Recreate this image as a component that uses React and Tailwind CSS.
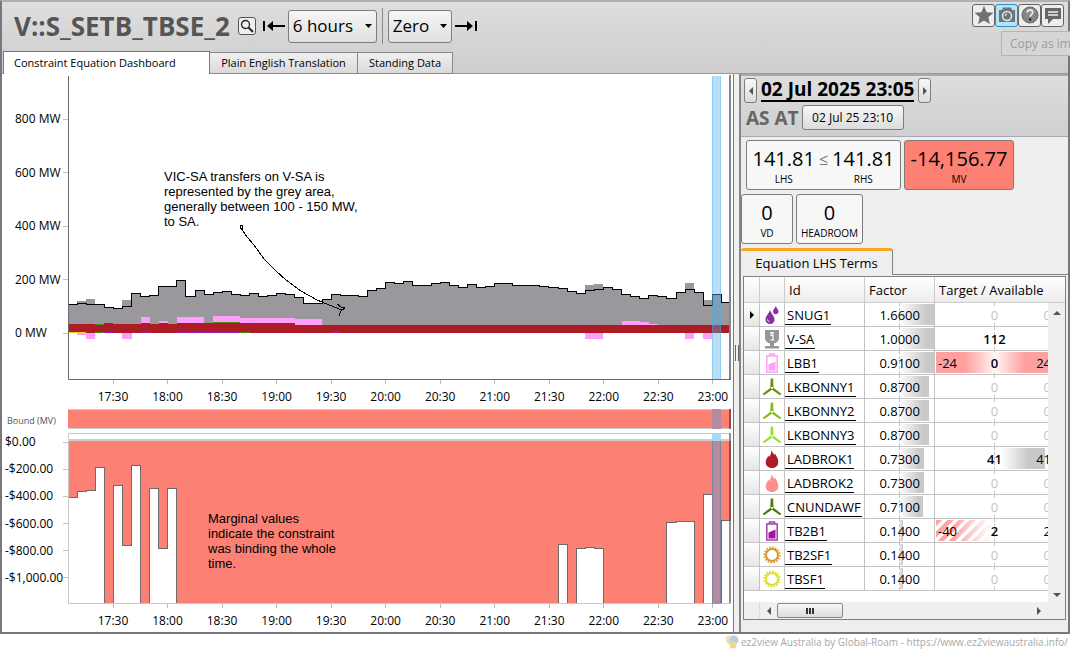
import React from "react";

const SLOT = 9.075;
const LEFT = 68;
const slotX = (i) => LEFT + i * SLOT;
const SLOTS = 73;

const times = ["17:30", "18:00", "18:30", "19:00", "19:30", "20:00", "20:30", "21:00", "21:30", "22:00", "22:30", "23:00"];

/* Top of the flow line for each five-minute interval */
const flow = [
  304.5, 303.5, 304.5, 304.5, 307.5, 308.5, 306.5, 293.5, 296, 295.5, 286.5, 286.5, 280.5, 296.5, 290.5, 294.5, 292.5, 291.5,
  294.5, 295.5, 293.5, 296.5, 295.5, 293.5, 294.5, 297.5, 303.5, 303.5, 299.5, 294.5, 295.5, 295.5, 296.5, 290.5, 288.5,
  282.5, 283.5, 281.5, 285.5, 285.5, 283.5, 282.5, 285.5, 287.5, 284.5, 287.5, 286.5, 283.5, 283.5, 285.5, 285.5, 285.5,
  286.5, 287.5, 288.5, 291.5, 293.5, 290.5, 289.5, 287.5, 289.5, 294.5, 296.5, 298.5, 295.5, 296.5, 298.5, 292.5, 289.5,
  292.5, 305.5, 294.5, 302.5,
];
const greyExtra = { 1: 301, 2: 299, 6: 300, 57: 285, 58: 284, 68: 283, 70: 300 };

/* [first slot, slot count, top, bottom] */
const pink = [
  [8, 1, 317, 325], [10, 1, 321, 325], [12, 3, 317, 325], [16, 3, 316, 325], [19, 5, 318, 325], [24, 1, 318, 325],
  [25, 3, 319, 325], [61, 2, 321, 325], [63, 1, 322, 325], [64, 1, 324, 325],
  [1, 1, 332, 335], [2, 1, 332, 339], [6, 1, 332, 339], [57, 2, 332, 339], [68, 1, 332, 339], [70, 1, 332, 339],
];
const red = [[0, 4, 324, 333], [4, 1, 323, 333], [5, 3, 324, 333], [8, 1, 323, 333], [9, 1, 324, 333], [10, 1, 323, 333],
  [11, 1, 324, 333], [12, 13, 323, 333], [25, 48, 325, 333]];

/* Lower edge of the marginal value area; 603 is the floor of the plot */
const marginal = Array(SLOTS).fill(603);
Object.assign(marginal, {
  0: 497.5, 1: 491.5, 2: 490.5, 3: 467.5, 5: 485.5, 6: 545.5, 7: 465.5, 9: 488.5, 10: 548.5, 11: 488.5,
  54: 544.5, 56: 548, 57: 547, 58: 548, 66: 522, 67: 521.5, 68: 521, 70: 494, 72: 520.5,
});

const steps = (ys) =>
  ys.map((y, i) => `${i ? "V" : "M" + slotX(0) + " "}${y}H${slotX(i + 1)}`).join("");

function Blocks({ items, fill }) {
  return items.map(([s, n, t, b]) => (
    <rect key={s + "-" + t} x={slotX(s)} y={t} width={n * SLOT} height={b - t} fill={fill} shapeRendering="crispEdges" />
  ));
}

function FlowChart() {
  return (
    <svg viewBox="68 75 663 305" preserveAspectRatio="none" className="block h-full w-full" role="img" aria-label="Flow in MW">
      <path d={steps(flow) + "V333H68Z"} fill="#9a989d" />
      {Object.entries(greyExtra).map(([i, y]) => (
        <rect key={i} x={slotX(+i)} y={y} width={SLOT} height={flow[i] - y} fill="#9a989d" shapeRendering="crispEdges" />
      ))}
      <Blocks items={pink} fill="#ff9ffc" />
      <Blocks items={red} fill="#ad1c24" />
      <Blocks items={[[3, 1, 324, 325], [16, 3, 322, 323], [3, 1, 332, 333], [19, 1, 332, 333]]} fill="#4f8a10" />
      <Blocks items={[[4, 1, 332, 333], [8, 1, 332, 333], [12, 7, 332, 333], [29, 1, 332, 333]]} fill="#9b1fb0" />
      <Blocks items={[[0, 2, 332, 333]]} fill="#f0d020" />
      <path d={steps(flow)} fill="none" stroke="#000" strokeWidth="1" shapeRendering="crispEdges" />
      <rect x="712" y="76" width="9" height="303" fill="#4aaee8" fillOpacity=".4" />
      <path d="M712.5 76V379M720.5 76V379" stroke="#4aaee8" strokeOpacity=".35" />
      <rect x="729" y="75" width="2" height="304" fill="#87878a" />
      <path d="M68.500 76V379.500H731" fill="none" stroke="#6a6a6a" />
      <path d="M240 225h2.500v3h-2.500zM241 228l6 9 7 8 10 14 12 12 10 9 15 11 16 9 12 5 13 5M337 304l4 3 4 1-4 3-1 2-1 3" fill="none" stroke="#000" shapeRendering="crispEdges" />
    </svg>
  );
}

function MarginalChart() {
  return (
    <svg viewBox="68 409 663 195" preserveAspectRatio="none" className="block h-full w-full" role="img" aria-label="Marginal value in dollars">
      <rect x="68" y="409" width="663" height="20" fill="#fc8073" />
      <path d="M68 409.500H731M68 428.500H731" stroke="#c9cfca" />
      <path d={"M68 441" + steps(marginal).replace("M68 ", "V") + "V441Z"} fill="#fc8073" />
      <path d={steps(marginal)} fill="none" stroke="#6c6a6a" shapeRendering="crispEdges" />
      <path d="M68.500 603.500V433.500H731M68 603.500H731" fill="none" stroke="#c8c8c8" />
      <rect x="68" y="439" width="663" height="2" fill="#ccd0c8" />
      <rect x="712" y="409" width="9" height="20" fill="#b48aa0" />
      <rect x="712" y="433" width="9" height="8" fill="#a9d6f2" />
      <rect x="712" y="441" width="9" height="163" fill="#b48aa0" />
      <path d="M712.500 441V603M720.500 441V603" stroke="#7a86a0" />
      <path d="M730 409V429M730 441V521" stroke="#8f4a4c" strokeWidth="2" />
      <path d="M730 433V441M730 521V603" stroke="#8f8f92" strokeWidth="2" />
    </svg>
  );
}

function TimeAxis() {
  return (
    <div className="flex justify-between pl-[27px]">
      {times.map((t) => (
        <div key={t} className="flex w-9 flex-col items-center">
          <span className="h-1 w-px bg-[#bbb]" />
          <span className="mt-1 leading-[18px]">{t}</span>
        </div>
      ))}
    </div>
  );
}

function ValueAxis({ labels, className }) {
  return (
    <div className={"flex shrink-0 flex-col justify-between " + className}>
      {labels.map((l) => (
        <div key={l} className="flex h-5 items-center justify-between whitespace-nowrap">
          <span>{l}</span>
          <span className="h-px w-[5px] bg-[#c4c4c4]" />
        </div>
      ))}
    </div>
  );
}

const Turbine = ({ c }) => (
  <svg viewBox="0 0 20 20" className="h-5 w-5">
    <path d="M8.700 1.500h2.400l.4 8.700h-3.200zM8.800 10.400l1.500 2L2 18.200l-1.300-1.400zM11.200 10.400l-1.500 2L18 18.200l1.300-1.400z" fill={c} />
    <circle cx="10" cy="11" r=".8" fill="#fff" />
  </svg>
);
const Flame = ({ c }) => (
  <svg viewBox="0 0 20 20" className="h-5 w-5">
    <path d="M9.500 1c.5 2 1.800 3.200 2.800 5 .4-.4.600-1 .7-1.500 1.500 2.500 3.300 5.500 3.300 8.500 0 3.500-2.300 6-6.300 6s-6.300-2.500-6.300-5.800c0-3 1.800-4.700 2.800-6.700.2.700.5 1.200.9 1.500C8.300 6 9.500 4 9.500 1z" fill={c} />
  </svg>
);
const Battery = ({ c, o }) => (
  <svg viewBox="0 0 20 20" className="h-5 w-5">
    <path d="M7.500 3V1h5v2M4.800 3h10.400v16H4.800z" fill="#fff" stroke={o} strokeWidth="1.500" />
    <path d="M6.500 11.500l7-3v9h-7z" fill={c} />
  </svg>
);
const Sun = ({ c }) => (
  <svg viewBox="0 0 20 20" className="h-5 w-5">
    <circle cx="10" cy="10" r="6" fill="#fff" stroke={c} strokeWidth="2" />
    <circle cx="10" cy="10" r="7.600" fill="none" stroke={c} strokeWidth="2" strokeDasharray="1.500 1.484" />
  </svg>
);
const Drops = () => (
  <svg viewBox="0 0 20 20" className="h-5 w-5">
    <path d="M8 5c1 3.500 4.500 6 4.500 9.500A4.300 4.300 0 0 1 8 19a4.300 4.300 0 0 1-4.500-4.500C3.500 11 7 8.500 8 5z" fill="#8a2fa0" />
    <path d="M13.800 1c.6 2 2.700 3.500 2.700 5.500a2.700 2.700 0 0 1-5.400 0c0-2 2.100-3.500 2.700-5.500z" fill="#8a2fa0" />
    <path d="M5.500 14.500c.2 1.300 1 2 2 2.200" stroke="#fff" fill="none" />
  </svg>
);
const Link = () => (
  <svg viewBox="0 0 20 20" className="h-5 w-5">
    <path d="M3 1h14v8c0 3-2 4.500-5 5.500V17h5v2.500H3V17h5v-2.500C5 13.500 3 12 3 9z" fill="#97959a" />
    <path d="M8.300 6.500H11V11m-2.700 0h4M9 3.500h2v1.500H9z" fill="none" stroke="#fff" strokeWidth="1.200" />
  </svg>
);

const rows = [
  { id: "SNUG1", icon: <Drops />, factor: "1.6600", bar: 35, t: "0", r: "0", dim: true },
  { id: "V-SA", icon: <Link />, factor: "1.0000", bar: 35, t: "112" },
  { id: "LBB1", icon: <Battery c="#ff9ffc" o="#f9a3f7" />, factor: "0.9100", bar: 35, l: "-24", t: "0", r: "24", fill: "bg-linear-to-r from-[#ffa0a0] from-25% via-[#fff5f5] via-50% to-[#ffa0a0] to-75%" },
  { id: "LKBONNY1", icon: <Turbine c="#6b8e12" />, factor: "0.8700", bar: 30, t: "0", r: "0", dim: true },
  { id: "LKBONNY2", icon: <Turbine c="#86b81f" />, factor: "0.8700", bar: 30, t: "0", r: "0", dim: true },
  { id: "LKBONNY3", icon: <Turbine c="#9adf2e" />, factor: "0.8700", bar: 30, t: "0", r: "0", dim: true },
  { id: "LADBROK1", icon: <Flame c="#b01c26" />, factor: "0.7300", bar: 25, t: "41", r: "41", fill: "mr-[9px] bg-linear-to-r from-transparent from-60% to-[#c8c8c8] to-85%" },
  { id: "LADBROK2", icon: <Flame c="#ff8f8f" />, factor: "0.7300", bar: 25, t: "0", r: "0", dim: true },
  { id: "CNUNDAWF", icon: <Turbine c="#4f7a0c" />, factor: "0.7100", bar: 24, t: "0", r: "0", dim: true },
  { id: "TB2B1", icon: <Battery c="#a80fa8" o="#a040a8" />, factor: "0.1400", bar: 4, l: "-40", t: "2", r: "2", fill: "mr-[62px] bg-[repeating-linear-gradient(135deg,#ffa3a3_0px,#ffa3a3_4px,#ffffff_5px,#ffffff_8px)] mask-r-from-30%" },
  { id: "TB2SF1", icon: <Sun c="#d99a2b" />, factor: "0.1400", bar: 4, t: "0", r: "0", dim: true },
  { id: "TBSF1", icon: <Sun c="#dede2c" />, factor: "0.1400", bar: 4, t: "0", r: "0", dim: true },
];

const box = "rounded-[3px] border border-[#7d7d7d]";
const tool = "flex h-[23px] w-[23px] items-center justify-center rounded-[3px] border";
const btnFill = "bg-linear-to-b from-[#f8f8f8] to-[#dcdcdc]";

function Picker({ label, value, className }) {
  return (
    <label className={"relative flex h-[33px] items-center " + box + " bg-linear-to-b from-[#f6f6f6] to-[#dfdfdf] " + className}>
      <select aria-label={label} className="h-full w-full appearance-none pl-1 text-[17px] leading-7 outline-none">
        <option>{value}</option>
      </select>
      <svg viewBox="0 0 7 4" className="pointer-events-none absolute right-1 h-1 w-[7px]"><path d="M0 0h7L3.500 4z" /></svg>
    </label>
  );
}

function Arrow({ d }) {
  return <svg viewBox="0 0 8 8" className="h-2 w-2"><path d={d} fill="#555" /></svg>;
}

function TermsTable() {
  return (
    <div className="mx-[2px] mt-px border border-[#808080] bg-white">
      <div className="flex">
        <div className="min-w-0 flex-1 overflow-hidden">
          <table className="w-full table-fixed border-separate border-spacing-0 text-[13px] leading-5">
            <colgroup>
              <col className="w-4" /><col className="w-[25px]" /><col className="w-20" /><col className="w-[70px]" /><col />
            </colgroup>
            <thead>
              <tr className="h-[26px] bg-linear-to-b from-white to-[#ececec] text-left">
                <th className="border-r border-b border-[#ccc] p-0" />
                <th className="border-r border-b border-[#ccc] p-0" />
                <th className="border-r border-b border-[#ccc] p-0 pl-1 font-normal">Id</th>
                <th className="border-r border-b border-[#ccc] p-0 pl-1 font-normal">Factor</th>
                <th className="border-b border-[#ccc] p-0 pl-1 font-normal whitespace-nowrap">Target / Available</th>
              </tr>
            </thead>
            <tbody>
              {rows.map((r, i) => (
                <tr key={r.id} className="h-6">
                  <td className="border-r border-b border-[#c4c4c4] bg-linear-to-b from-white to-[#e6e6e6] p-0">
                    {i === 0 && <svg viewBox="0 0 4 8" className="ml-1.5 h-2 w-1"><path d="M0 0l4 4-4 4z" /></svg>}
                  </td>
                  <td className="border-r border-b border-[#c4c4c4] p-0"><div className="flex justify-center">{r.icon}</div></td>
                  <td className="overflow-hidden border-r border-b border-[#c4c4c4] p-0">
                    <div className="h-5"><a href="#" className="inline-block h-[19px] border-b border-black pr-px pl-[2px] leading-[19px]">{r.id}</a></div>
                  </td>
                  <td className="overflow-hidden border-r border-b border-[#c4c4c4] p-0">
                    <div className="grid h-[23px] items-center">
                      <span className="col-start-1 row-start-1 ml-[34px] h-[21px] bg-linear-to-r from-white to-[#c9c9c9] to-80%" style={{ width: r.bar }} />
                      <span className="col-start-1 row-start-1 ml-[34px] h-full w-0 border-l border-dashed border-[#c4c4c4]" />
                      <span className="col-start-1 row-start-1 pr-[14px] text-right">{r.factor}</span>
                    </div>
                  </td>
                  <td className="overflow-hidden border-b border-[#c4c4c4] p-0">
                    <div className="grid h-[23px] w-[119px] items-center">
                      <span className="col-start-1 row-start-1 ml-[59px] h-full w-0 border-l border-dashed border-[#c4c4c4]" />
                      {r.fill && <span className={"col-start-1 row-start-1 ml-px h-[21px] " + r.fill} />}
                      <span className={"relative col-start-1 row-start-1 grid grid-cols-3 items-center px-[3px] " + (r.dim ? "text-[#c4c4c4]" : "")}>
                        <span>{r.l}</span>
                        <span className={"justify-self-center " + (r.dim ? "bg-white leading-[14px]" : "font-semibold")}>{r.t}</span>
                        <span className="text-right">{r.r}</span>
                      </span>
                    </div>
                  </td>
                </tr>
              ))}
            </tbody>
          </table>
        </div>
        <div className="flex w-[17px] shrink-0 flex-col bg-[#efefef]">
          <div className="h-[26px] border-b border-[#ccc] bg-linear-to-b from-white to-[#ececec]" />
          <button aria-label="Scroll up" className="flex h-5 items-center justify-center"><Arrow d="M0 6h8L4 2z" /></button>
        </div>
      </div>
      <div className="flex">
        <div className="h-[11px] flex-1" />
        <button aria-label="Scroll down" className="flex h-[11px] w-[17px] justify-center bg-[#efefef]"><Arrow d="M0 2h8L4 6z" /></button>
      </div>
      <div className="flex h-[17px] items-center bg-[#efefef]">
        <span className="h-full w-4 border-r border-[#ddd]" />
        <button aria-label="Scroll left" className="flex w-[17px] justify-center"><Arrow d="M6 0v8L2 4z" /></button>
        <button aria-label="Scroll position" className={"flex h-[15px] w-[66px] items-center justify-center gap-px rounded-[2px] border border-[#8a8a8a] " + btnFill}>
          <span className="h-1.5 w-0.5 bg-[#333]" /><span className="h-1.5 w-0.5 bg-[#333]" /><span className="h-1.5 w-0.5 bg-[#333]" />
        </button>
        <button aria-label="Scroll right" className="mr-[22px] ml-auto"><Arrow d="M2 0v8l4-4z" /></button>
      </div>
    </div>
  );
}

function Value({ value, label, className }) {
  return (
    <div className={"flex flex-col items-center " + className}>
      <span className="text-[20px] leading-6">{value}</span>
      <span className="text-[10px] leading-4">{label}</span>
    </div>
  );
}

export default function App() {
  return (
    <div className="overflow-x-hidden bg-white font-['Open_Sans','Noto_Sans',sans-serif] text-[12px] text-black">
      <div className="border-x-2 border-t-2 border-b-2 border-[#77777d] border-t-[#b0b0b0]">
        <header className="relative flex h-[72px] flex-col justify-between border-b border-[#9a9aa2] bg-linear-to-b from-[#dedede] to-[#cdcdcd]">
          <div className="flex h-12 items-center pl-3">
            <h1 className="text-[26px] leading-9 font-bold text-[#555]">V::S_SETB_TBSE_2</h1>
            <button aria-label="Search" className="ml-2 flex h-[18px] w-[18px] items-center justify-center rounded-[3px] border border-[#555] bg-[#f0f0f0]">
              <svg viewBox="0 0 14 14" className="h-3.5 w-3.5" fill="none" stroke="#222"><circle cx="5.500" cy="5.500" r="4" strokeWidth="1.300" /><path d="M8.500 8.500l4.500 4.500" strokeWidth="2" /></svg>
            </button>
            <button aria-label="Jump to start" className="mr-[3px] ml-[7px]">
              <svg viewBox="0 0 22 12" className="h-3 w-[22px]"><path d="M0 1h2v10H0zM4 6l6-5v4h12v2H10v4z" /></svg>
            </button>
            <Picker label="Range" value="6 hours" className="w-[89px]" />
            <span className="mx-[5px] h-9 w-px bg-[#8a8a8a]" />
            <Picker label="Offset" value="Zero" className="w-[64px]" />
            <button aria-label="Jump to end" className="ml-[3px]">
              <svg viewBox="0 0 22 12" className="h-3 w-[22px]"><path d="M20 1h2v10h-2zM18 6l-6-5v4H0v2h12v4z" /></svg>
            </button>
            <div className="mr-1 mb-[22px] ml-auto flex">
              <button aria-label="Favourite" className={tool + " border-[#666] bg-[#ededed]"}>
                <svg viewBox="0 0 20 20" className="h-5 w-5"><path d="M10 .8l2.700 6.400 6.800.6-5.200 4.500 1.600 6.700-5.900-3.600L4.100 19l1.600-6.700L.5 7.800l6.800-.6z" fill="#707070" /></svg>
              </button>
              <button aria-label="Copy as image" className={tool + " border-[#2f8fc4] bg-[#b5e3f8]"}>
                <svg viewBox="0 0 20 20" className="h-5 w-5"><path d="M2 5h3l1-2.500h8L15 5h3v12H2z" fill="#707579" /><circle cx="10" cy="11" r="4.500" fill="#707579" stroke="#d5f0fb" strokeWidth="1.500" /><path d="M8 11a2 2 0 0 1 2-2" stroke="#fff" fill="none" /></svg>
              </button>
              <button aria-label="Help" className={tool + " border-[#666] bg-[#ededed]"}>
                <svg viewBox="0 0 20 20" className="h-5 w-5"><circle cx="10" cy="10" r="8" fill="#858585" stroke="#666" /><path d="M7.300 7.800C7.300 6 8.500 5 10 5s2.800 1 2.800 2.500c0 2-2.600 2-2.600 4.300" fill="none" stroke="#e8e8e8" strokeWidth="1.800" /><circle cx="10.200" cy="14.500" r="1.200" fill="#222" /></svg>
              </button>
              <button aria-label="Comment" className={tool + " border-[#666] bg-[#ededed]"}>
                <svg viewBox="0 0 20 20" className="h-5 w-5"><path d="M2 3h16v11h-8l-5 5v-5H2z" fill="#666" /><path d="M5 7h10M5 10h10" stroke="#eee" strokeWidth="1.500" /></svg>
              </button>
            </div>
          </div>
          <div className="absolute top-[29px] right-[-2px] h-[25px] w-[69px] border border-r-0 border-[#b4b4b4] bg-[#d6d6d6] pl-2 leading-[23px] whitespace-nowrap text-[#9c9c9c]" role="tooltip">Copy as im</div>
          <nav className="-mb-px flex items-end pl-px text-[11px]" role="tablist">
            <button role="tab" aria-selected="true" className="h-[23px] w-[207px] border border-b-0 border-[#77777d] bg-white pl-[10px] text-left leading-5">Constraint Equation Dashboard</button>
            <button role="tab" className="h-[22px] w-[148px] border border-l-0 border-[#88888e] bg-linear-to-b from-[#f0f0f0] to-[#dadada] leading-5 whitespace-nowrap">Plain English Translation</button>
            <button role="tab" className="h-[22px] w-[95px] border border-l-0 border-[#88888e] bg-linear-to-b from-[#f0f0f0] to-[#dadada] leading-5 whitespace-nowrap">Standing Data</button>
          </nav>
        </header>

        <main className="flex">
          <section className="min-w-0 flex-1 border-r border-[#77777d] pt-px pr-[2px] pb-[2px]">
            <div className="flex">
              <ValueAxis labels={["800 MW", "600 MW", "400 MW", "200 MW", "0 MW"]} className="h-[268px] w-[66px] pt-[34px] pl-[13px]" />
              <div className="relative min-w-0 flex-1">
                <div className="h-[305px]"><FlowChart /></div>
                <p className="absolute top-[94px] left-24 w-52 font-['Liberation_Sans',Arial,sans-serif] text-[13px] leading-[15px]">
                  VIC-SA transfers on V-SA is represented by the grey area, generally between 100 - 150 MW, to SA.
                </p>
                <TimeAxis />
              </div>
            </div>
            <div className="mt-[3px] flex">
              <div className="w-[66px] shrink-0">
                <div className="h-[23px] pt-1 pl-[5px] text-[9px] leading-4 whitespace-nowrap text-[#555]">Bound (MV)</div>
                <ValueAxis labels={["$0.00", "-$200.00", "-$400.00", "-$600.00", "-$800.00", "-$1,000.00"]} className="h-[156px] pl-[3px]" />
              </div>
              <div className="relative min-w-0 flex-1">
                <div className="h-[195px]"><MarginalChart /></div>
                <p className="absolute top-[102px] left-[140px] w-[135px] font-['Liberation_Sans',Arial,sans-serif] text-[13px] leading-[15px]">
                  Marginal values indicate the constraint was binding the whole time.
                </p>
                <TimeAxis />
              </div>
            </div>
          </section>

          <div className="flex w-[7px] shrink-0 items-center justify-center gap-[2px] border-r-2 border-[#85858b] bg-[#f0f0f0]">
            <span className="h-4 w-px bg-[#666]" /><span className="h-4 w-px bg-[#666]" />
          </div>

          <aside className="w-[327px] shrink-0 bg-[#eeeeee]">
            <div className="border-t-2 border-b border-[#a8a8ae] bg-linear-to-b from-[#dedede] to-[#cfcfcf] pt-[2px] pb-[6px] pl-[3px]">
              <div className="flex items-center">
                <button aria-label="Previous interval" className={"flex h-[25px] w-[13px] items-center justify-center " + box + " " + btnFill}><Arrow d="M6 0v8L2 4z" /></button>
                <a href="#" className="mx-1 border-b-2 border-black text-[19px] leading-[21px] font-bold whitespace-nowrap">02 Jul 2025 23:05</a>
                <button aria-label="Next interval" className={"flex h-[25px] w-[13px] items-center justify-center " + box + " " + btnFill}><Arrow d="M2 0v8l4-4z" /></button>
              </div>
              <div className="mt-[2px] flex items-center gap-[3px] pl-[2px]">
                <span className="text-[19px] leading-6 font-bold text-[#666]">AS AT</span>
                <button className={"h-[25px] w-[102px] " + box + " " + btnFill}>02 Jul 25 23:10</button>
              </div>
            </div>
            <div className="flex gap-[3px] pt-[3px] pl-[5px]">
              <div className={"flex h-[50px] w-[155px] justify-center gap-1 bg-[#f7f7f7] pt-[6px] " + box}>
                <Value value="141.81" label="LHS" className="" />
                <span className="text-[16px] leading-6 text-[#777]">≤</span>
                <Value value="141.81" label="RHS" className="" />
              </div>
              <Value value="-14,156.77" label="MV" className={"h-[50px] w-[110px] bg-[#fc8073] pt-[6px] " + box} />
            </div>
            <div className="flex gap-[3px] pt-1">
              <Value value="0" label="VD" className={"h-[50px] w-[52px] bg-[#f7f7f7] pt-[6px] " + box} />
              <Value value="0" label="HEADROOM" className={"h-[50px] w-[67px] bg-[#f7f7f7] pt-[6px] " + box} />
            </div>
            <div className="flex pt-1" role="tablist">
              <button role="tab" aria-selected="true" className="h-[27px] w-[152px] rounded-t-[3px] border-t-[3px] border-r border-[#808080] border-t-[#f5a623] text-[13px] leading-6">Equation LHS Terms</button>
              <span className="flex-1 border-b border-[#808080]" />
            </div>
            <TermsTable />
          </aside>
        </main>
      </div>
      <footer className="flex h-4 items-center justify-end gap-[2px] pr-[2px] text-[10px] whitespace-nowrap text-[#a8a8a8]">
        <svg viewBox="0 0 14 14" className="h-3.5 w-3.5"><circle cx="4" cy="4" r="3.500" fill="#f3e3b5" /><circle cx="9" cy="5" r="4.500" fill="#b9cfe8" /><circle cx="8" cy="10" r="3.500" fill="#f0d890" /><circle cx="4" cy="7" r="2" fill="#cfe3c0" /></svg>
        <span>ez2view Australia by Global-Roam - https://www.ez2viewaustralia.info/</span>
      </footer>
    </div>
  );
}
